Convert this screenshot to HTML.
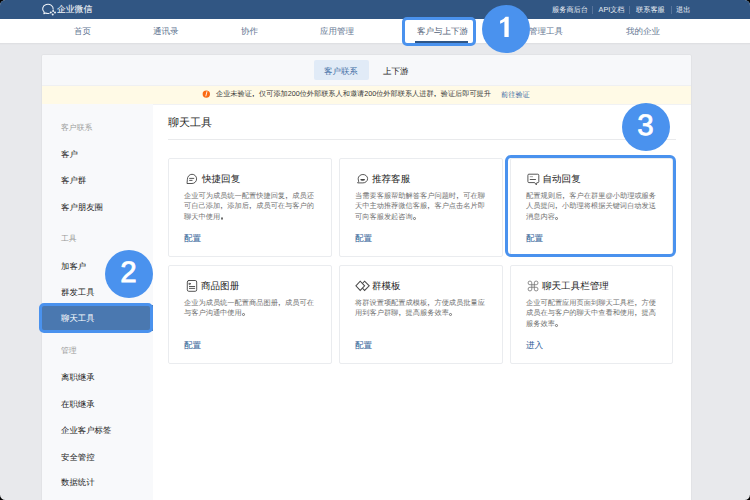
<!DOCTYPE html>
<html><head><meta charset="utf-8">
<style>
*{margin:0;padding:0;box-sizing:border-box}
html,body{width:750px;height:500px;overflow:hidden;background:#000}
body{font-family:"Liberation Sans",sans-serif;position:relative;text-rendering:geometricPrecision}
#root{position:absolute;left:0;top:0;width:750px;height:500px;background:#e8e9ec;border-radius:5.5px;overflow:hidden}
.a{position:absolute;white-space:nowrap;line-height:1}
#top{position:absolute;left:0;top:0;width:750px;height:19px;background:#315683}
#nav{position:absolute;left:0;top:19px;width:750px;height:24px;background:#fff}
#navsh{position:absolute;left:0;top:43px;width:750px;height:2px;background:linear-gradient(#dcdde0,#e8e9ec)}
#panel{position:absolute;left:42px;top:55px;width:649px;height:445px;background:#fff;border-radius:2px 2px 0 0;overflow:hidden;box-shadow:0 0 0 1px #e2e3e6}
#tabs{position:absolute;left:0;top:0;width:649px;height:31px;background:#f7f8fa;border-bottom:1px solid #eff0f2}
#warn{position:absolute;left:0;top:31px;width:649px;height:18px;background:#fffae6}
#side{position:absolute;left:0;top:49px;width:111px;height:396px;background:#f8f9fb}
.card{position:absolute;width:163.8px;height:99.4px;border:1px solid #eaecef;border-radius:2px;background:#fff}
.nv{color:#627591;font-size:8.5px}
.tl{color:#e9eef5;font-size:7.2px}
.sep{position:absolute;width:1px;height:8px;background:#58749b;top:6px}
.sl{color:#999;font-size:7.85px}
.si{color:#222;font-size:8.4px}
.ct{color:#222;font-size:9.55px}
.cd{color:#707070;font-size:7.23px;line-height:10.5px;white-space:normal;width:132px}
.cl{color:#2b5d96;font-size:8.6px;margin:-.3px 0 0 0}
.circ{position:absolute;width:48px;height:48px;border-radius:50%;background:#4a92ee;color:#fff;font-size:29.5px;text-align:center;line-height:45px;text-indent:-1px;-webkit-text-stroke:.8px #fff}
.hl{position:absolute;border:3px solid #4a92ee;border-radius:5px}
.cm{display:inline-block;width:1em;font-weight:bold;text-indent:.05em}
.cp{display:inline-block;width:1em;height:1px;position:relative}.cp::after{content:"";position:absolute;left:.06em;bottom:-1px;width:.38em;height:.38em;border:.12em solid currentColor;border-radius:50%;box-sizing:border-box}
</style></head><body><div id="root">
<div id="top"></div>
<div id="nav"></div>
<div id="navsh"></div>

<!-- logo -->
<svg style="position:absolute;left:40px;top:2px" width="18" height="15" viewBox="0 0 18 15"><path d="M13.17 7.6A5.3 4.6 0 1 0 4.2 10.15L3.9 11.7L5.6 11.03A5.3 4.6 0 0 0 9.5 11.3" fill="none" stroke="#eef2f7" stroke-width="1.1" stroke-linejoin="round"/><g fill="#eef2f7"><circle cx="13.1" cy="8.9" r="1"/><circle cx="15" cy="10.6" r="1"/><circle cx="12.7" cy="12.4" r="1"/><circle cx="10.8" cy="10.4" r="1"/></g></svg>
<div class="a" style="left:57px;top:5px;color:#f2f5f9;font-size:8.8px;-webkit-text-stroke:.1px #f2f5f9">企业微信</div>
<div class="a tl" style="left:552px;top:6px">服务商后台</div>
<div class="sep" style="left:592px"></div>
<div class="a tl" style="left:598.6px;top:6px">API文档</div>
<div class="sep" style="left:629px"></div>
<div class="a tl" style="left:636px;top:6px">联系客服</div>
<div class="sep" style="left:671px"></div>
<div class="a tl" style="left:676px;top:6px">退出</div>

<div class="a nv" style="left:74px;top:27px">首页</div>
<div class="a nv" style="left:153px;top:27px">通讯录</div>
<div class="a nv" style="left:241px;top:27px">协作</div>
<div class="a nv" style="left:320px;top:27px">应用管理</div>
<div class="a nv" style="left:417px;top:27px;color:#526177">客户与上下游</div>
<div style="position:absolute;left:415px;top:41px;width:53px;height:2px;background:#2f5687"></div>
<div class="a nv" style="left:529px;top:27px">管理工具</div>
<div class="a nv" style="left:626px;top:27px">我的企业</div>

<div id="panel">
 <div id="tabs">
  <div style="position:absolute;left:272px;top:5px;width:55px;height:20px;background:#e1ebf7;border-radius:2px"></div>
  <div class="a" style="left:282px;top:12px;font-size:8.45px;color:#4470a6">客户联系</div>
  <div class="a" style="left:341px;top:12px;font-size:8.5px;color:#222">上下游</div>
 </div>
 <div id="warn">
  <svg style="position:absolute;left:159px;top:3px" width="10" height="10" viewBox="0 0 10 10"><circle cx="5.3" cy="5.1" r="3.7" fill="#fa6a14"/><path d="M5.9 2.7L4.9 6.9" stroke="#fff" stroke-width=".9" stroke-linecap="round"/></svg>
  <div class="a" style="left:174px;top:5px;font-size:7.18px;color:#383838">企业未验证<span class="cm">,</span>仅可添加200位外部联系人和邀请200位外部联系人进群<span class="cm">,</span>验证后即可提升</div>
  <div class="a" style="left:459px;top:5px;font-size:7.2px;color:#3a68a3">前往验证</div>
 </div>
 <div style="position:absolute;left:0;top:49px;width:649px;height:1px;background:#f1f2f4"></div>
 <div id="side">
  <div class="a sl" style="left:19px;top:20px">客户联系</div>
  <div class="a si" style="left:19px;top:46px">客户</div>
  <div class="a si" style="left:19px;top:72px">客户群</div>
  <div class="a si" style="left:19px;top:99px">客户朋友圈</div>
  <div class="a sl" style="left:19px;top:131px">工具</div>
  <div class="a si" style="left:19px;top:158px">加客户</div>
  <div class="a si" style="left:19px;top:184px">群发工具</div>
  <div style="position:absolute;left:0;top:201px;width:111px;height:26px;background:#4a78b0"></div>
  <div class="a si" style="left:19px;top:210px;color:#fff">聊天工具</div>
  <div class="a sl" style="left:19px;top:243px">管理</div>
  <div class="a si" style="left:19px;top:269px">离职继承</div>
  <div class="a si" style="left:19px;top:296px">在职继承</div>
  <div class="a si" style="left:19px;top:322px">企业客户标签</div>
  <div class="a si" style="left:19px;top:349px">安全管控</div>
  <div class="a si" style="left:19px;top:374px">数据统计</div>
 </div>
 <div class="a" style="left:126px;top:62.6px;font-size:11px;color:#2a2a2a">聊天工具</div>
 <div style="position:absolute;left:126px;top:84px;width:508px;height:1px;background:#e9eaec"></div>
</div>

<!-- cards -->
<div class="card" style="left:168px;top:158px"></div>
<div class="card" style="left:339px;top:158px"></div>
<div class="card" style="left:510px;top:158px;width:163px"></div>
<div class="card" style="left:168px;top:265px"></div>
<div class="card" style="left:339px;top:265px"></div>
<div class="card" style="left:510px;top:265px;width:163px"></div>

<div class="a ct" style="left:202px;top:175px">快捷回复</div>
<div class="a cd" style="left:184px;top:190.5px">企业可为成员统一配置快捷回复<span class="cm">,</span>成员还可自己添加<span class="cm">,</span>添加后<span class="cm">,</span>成员可在与客户的聊天中使用<span class="cp"></span></div>
<div class="a cl" style="left:184px;top:234px">配置</div>

<div class="a ct" style="left:372px;top:175px">推荐客服</div>
<div class="a cd" style="left:355px;top:190.5px">当需要客服帮助解答客户问题时<span class="cm">,</span>可在聊天中主动推荐微信客服<span class="cm">,</span>客户点击名片即可向客服发起咨询<span class="cp"></span></div>
<div class="a cl" style="left:355px;top:234px">配置</div>

<div class="a ct" style="left:542.5px;top:175px">自动回复</div>
<div class="a cd" style="left:526px;top:190.5px">配置规则后<span class="cm">,</span>客户在群里@小助理或服务人员提问<span class="cm">,</span>小助理将根据关键词自动发送消息内容<span class="cp"></span></div>
<div class="a cl" style="left:526px;top:234px">配置</div>

<div class="a ct" style="left:201px;top:282px">商品图册</div>
<div class="a cd" style="left:184px;top:297.5px">企业为成员统一配置商品图册<span class="cm">,</span>成员可在与客户沟通中使用<span class="cp"></span></div>
<div class="a cl" style="left:184px;top:341px">配置</div>

<div class="a ct" style="left:372px;top:282px">群模板</div>
<div class="a cd" style="left:355px;top:297.5px">将群设置项配置成模板<span class="cm">,</span>方便成员批量应用到客户群聊<span class="cm">,</span>提高服务效率<span class="cp"></span></div>
<div class="a cl" style="left:355px;top:341px">配置</div>

<div class="a ct" style="left:542px;top:282px">聊天工具栏管理</div>
<div class="a cd" style="left:526px;top:297.5px">企业可配置应用页面到聊天工具栏<span class="cm">,</span>方便成员在与客户的聊天中查看和使用<span class="cm">,</span>提高服务效率<span class="cp"></span></div>
<div class="a cl" style="left:526px;top:341px">进入</div>


<!-- icons -->
<svg style="position:absolute;left:185px;top:172px" width="14" height="14" viewBox="0 0 14 14" fill="none" stroke="#444" stroke-width=".9" stroke-linecap="round"><path d="M2.4 6.9A4.6 4.6 0 1 1 7 11.5H2.4Z" stroke-linejoin="round"/><path d="M4.6 6.4H8.8M4.6 8.4H7.1"/></svg>
<svg style="position:absolute;left:356px;top:172px" width="14" height="14" viewBox="0 0 14 14" fill="none" stroke="#444" stroke-width=".9"><path d="M2.2 6.7A4.7 4.2 0 1 1 6.9 10.9H1.6L2.7 9.3C2.4 8.5 2.2 7.6 2.2 6.7Z" stroke-linejoin="round"/><path d="M4.3 6.9H9A2.35 1.9 0 0 1 4.3 6.9Z" fill="#444" stroke="none"/></svg>
<svg style="position:absolute;left:525px;top:172px" width="16" height="16" viewBox="0 0 16 16" fill="none" stroke="#444" stroke-width=".9" stroke-linecap="round" stroke-linejoin="round"><path d="M9.3 10.6H3.9A1 1 0 0 1 2.9 9.6V3.2A1 1 0 0 1 3.9 2.2H12.8A1 1 0 0 1 13.8 3.2V9.6A1 1 0 0 1 12.8 10.6H11.9L11.4 12.5Z"/><path d="M5.2 4.7H7.6" stroke="#999"/><path d="M5.2 7.5H10.5"/></svg>
<svg style="position:absolute;left:185px;top:278px" width="14" height="16" viewBox="0 0 14 16" fill="none" stroke="#444" stroke-width=".9" stroke-linecap="round"><rect x="2.3" y="2.5" width="9.4" height="10.8" rx="1.5"/><path d="M4.2 5.2L6 5.7L4.5 6.6Z" fill="#444" stroke-width=".6"/><path d="M4.4 8.5H9.7M4.4 10.4H9.7"/></svg>
<svg style="position:absolute;left:354px;top:278px" width="18" height="16" viewBox="0 0 18 16" fill="none" stroke="#4a4a4a" stroke-width="1.05" stroke-linejoin="miter"><path d="M1.9 7.8L6.2 3.2L10.6 7.8L6.2 12.4Z"/><path d="M8.4 5.5L10.6 3.2L15.2 7.8L10.6 12.4L8.4 10.1"/></svg>
<svg style="position:absolute;left:526px;top:278px" width="14" height="16" viewBox="0 0 14 16"><path transform="translate(7.05 8)" d="M-1.25 -3.1A1.85 1.85 0 1 0 -3.1 -1.25H3.1A1.85 1.85 0 1 0 1.25 -3.1V3.1A1.85 1.85 0 1 0 3.1 1.25H-3.1A1.85 1.85 0 1 0 -1.25 3.1Z" fill="none" stroke="#707070" stroke-width=".8"/></svg>

<!-- annotations -->
<div class="hl" style="left:402px;top:17px;width:74px;height:29px"></div>
<div class="hl" style="left:39px;top:303px;width:114px;height:30px"></div>
<div class="hl" style="left:505.2px;top:155.2px;width:170.8px;height:101.6px;border-radius:6px"></div>
<div class="circ" style="left:482px;top:5px"></div>
<svg style="position:absolute;left:482px;top:5px" width="48" height="48" viewBox="482 5 48 48"><path d="M508.7 16.8H505.6Q503.8 19.6 500.1 20.7V23.7Q502.6 23 504.4 21.5V37H508.7Z" fill="#fff"/></svg>
<div class="circ" style="left:105px;top:250px">2</div>
<div class="circ" style="left:622px;top:103px">3</div>
</div></body></html>
